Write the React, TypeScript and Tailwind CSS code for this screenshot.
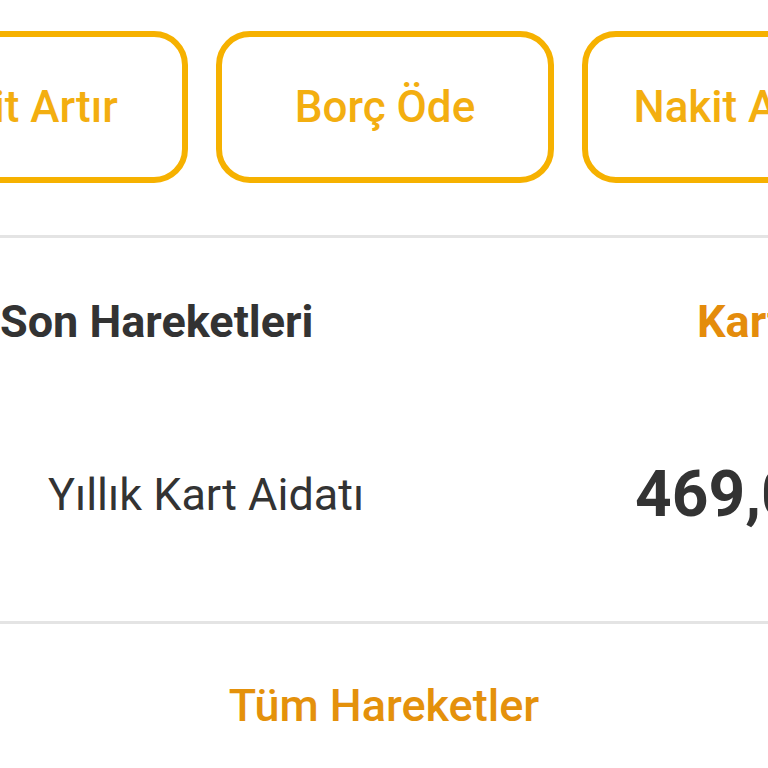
export default function App() {
  const actions = ['Limit Artır', 'Borç Öde', 'Nakit Avans'];

  return (
    <div className="w-[768px] h-[768px] overflow-hidden bg-white font-['Roboto',sans-serif]">
      {/* Quick actions */}
      <div className="pt-[31px] h-[235px]">
        <div className="flex gap-[28px] w-max ml-[-150px]">
          {actions.map((label) => (
            <div
              key={label}
              className="w-[338px] h-[152px] shrink-0 rounded-[34px] border-[6px] border-[#f6b100] flex items-center justify-center text-[44px] font-medium text-[#f3ae10] whitespace-nowrap"
            >
              {label}
            </div>
          ))}
        </div>
      </div>

      <div className="h-[3px] bg-[#e4e4e4]" />

      {/* Section header */}
      <div className="h-[168px] flex items-center whitespace-nowrap">
        <span className="w-[697px] shrink-0 text-[45px] font-bold text-[#333333]">Son Hareketleri</span>
        <span className="shrink-0 text-[45px] font-bold text-[#e48c0c]">Kart Detayları</span>
      </div>

      {/* Transaction row */}
      <div className="h-[215px] pb-[38px] flex items-center whitespace-nowrap">
        <span className="w-[635px] shrink-0 pl-[48px] text-[45px] text-[#333333]">Yıllık Kart Aidatı</span>
        <span className="shrink-0 text-[64px] font-bold text-[#333333]">469,00 TL</span>
      </div>

      <div className="h-[3px] bg-[#e4e4e4]" />

      <div className="h-[164px] flex items-center justify-center">
        <span className="text-[45px] font-medium text-[#e4910b]">Tüm Hareketler</span>
      </div>
    </div>
  );
}
